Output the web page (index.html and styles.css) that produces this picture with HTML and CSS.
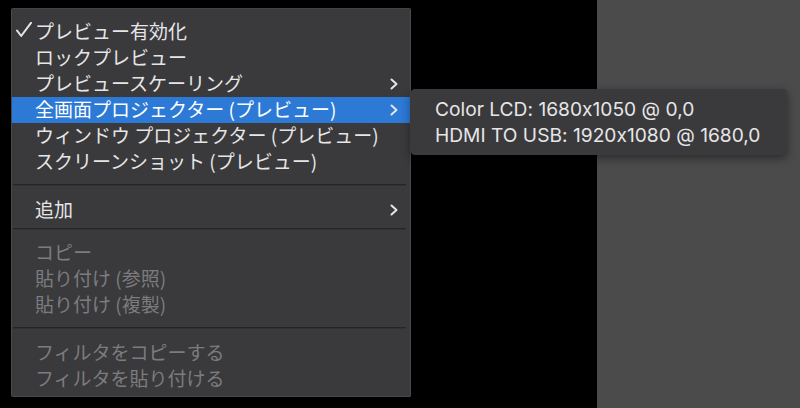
FILE: index.html
```html
<!DOCTYPE html>
<html lang="ja">
<head>
<meta charset="utf-8">
<title>Context menu</title>
<link rel="stylesheet" href="styles.css">
</head>
<body>
<div class="screen">
  <div class="canvas"></div>
  <div class="panel"></div>

  <div class="menu">
    <div class="item">
      <span class="check"><svg width="16" height="16" viewBox="0 0 16 16"><path d="M1 8.5 L5.2 14 L15 0.8" fill="none" stroke="#e6e6e6" stroke-width="2" stroke-linecap="round" stroke-linejoin="round"/></svg></span>
      <span class="label">プレビュー有効化</span>
    </div>
    <div class="item"><span class="check"></span><span class="label">ロックプレビュー</span></div>
    <div class="item"><span class="check"></span><span class="label">プレビュースケーリング</span>
      <svg class="chev" width="9" height="12" viewBox="0 0 9 12"><path d="M1.5 1.5 L6.5 6 L1.5 10.5" fill="none" stroke="#e6e6e6" stroke-width="2" stroke-linecap="round" stroke-linejoin="round"/></svg></div>
    <div class="item active"><span class="check"></span><span class="label">全画面プロジェクター (プレビュー)</span>
      <svg class="chev" width="9" height="12" viewBox="0 0 9 12"><path d="M1.5 1.5 L6.5 6 L1.5 10.5" fill="none" stroke="#e6e6e6" stroke-width="2" stroke-linecap="round" stroke-linejoin="round"/></svg></div>
    <div class="item"><span class="check"></span><span class="label">ウィンドウ プロジェクター (プレビュー)</span></div>
    <div class="item"><span class="check"></span><span class="label">スクリーンショット (プレビュー)</span></div>
    <div class="sep sep-a"></div>
    <div class="item"><span class="check"></span><span class="label">追加</span>
      <svg class="chev" width="9" height="12" viewBox="0 0 9 12"><path d="M1.5 1.5 L6.5 6 L1.5 10.5" fill="none" stroke="#e6e6e6" stroke-width="2" stroke-linecap="round" stroke-linejoin="round"/></svg></div>
    <div class="sep sep-b"></div>
    <div class="item disabled"><span class="check"></span><span class="label">コピー</span></div>
    <div class="item disabled"><span class="check"></span><span class="label">貼り付け (参照)</span></div>
    <div class="item disabled"><span class="check"></span><span class="label">貼り付け (複製)</span></div>
    <div class="sep sep-a"></div>
    <div class="item disabled"><span class="check"></span><span class="label">フィルタをコピーする</span></div>
    <div class="item disabled"><span class="check"></span><span class="label">フィルタを貼り付ける</span></div>
  </div>

  <div class="submenu">
    <div class="subitem">Color LCD: 1680x1050 @ 0,0</div>
    <div class="subitem">HDMI TO USB: 1920x1080 @ 1680,0</div>
  </div>
</div>
</body>
</html>
```

FILE: styles.css
```css
* { box-sizing: border-box; }
html, body { margin: 0; padding: 0; }
body {
  width: 800px;
  height: 408px;
  overflow: hidden;
  background: #000;
  font-family: "Noto Sans CJK JP", "Noto Sans", sans-serif;
}
.screen {
  position: relative;
  display: flex;
  width: 800px;
  height: 408px;
}
.canvas {
  width: 597px;
  background: #000;
}
.panel {
  flex: 1;
  background: #4b4b4b;
}
.menu {
  position: absolute;
  left: 11px;
  top: 8px;
  width: 400px;
  padding: 10px 0 4px;
  background: #3a393c;
  border: 1px solid #4a494c;
  border-top-color: #444346;
  border-radius: 2px;
}
.item {
  display: flex;
  align-items: center;
  height: 26px;
  padding-left: 4px;
  padding-right: 11px;
  padding-bottom: 3px;
  color: #e6e6e6;
  font-size: 19px;
  line-height: 23px;
  white-space: nowrap;
}
.item.active {
  background: #2c79d6;
  color: #fff;
}
.item.disabled {
  color: #7c7c7e;
}
.check {
  width: 19px;
  height: 23px;
  display: flex;
  align-items: center;
  flex: none;
}
.check svg { display: block; margin-top: -1px; }
.label { flex: none; }
.chev { margin-left: auto; display: block; margin-top: 2px; }
.sep {
  height: 1px;
  background: #252427;
  margin-left: 1px;
  margin-right: 4px;
  box-shadow: 0 1px 0 #323134;
}
.sep-a { margin-top: 9px; margin-bottom: 12px; }
.sep-b { margin-top: 5px; margin-bottom: 11px; }
.submenu {
  position: absolute;
  left: 411px;
  top: 89px;
  width: 376px;
  height: 66px;
  padding-top: 7px;
  background: #3a393c;
  border-radius: 4px;
  box-shadow: 0 3px 10px rgba(0, 0, 0, 0.45);
}
.subitem {
  height: 26px;
  line-height: 26px;
  padding-left: 24px;
  color: #e6e6e6;
  font-family: "Inter", "Liberation Sans", sans-serif;
  font-size: 19.2px;
  font-feature-settings: "calt" 0;
  white-space: nowrap;
}
```
